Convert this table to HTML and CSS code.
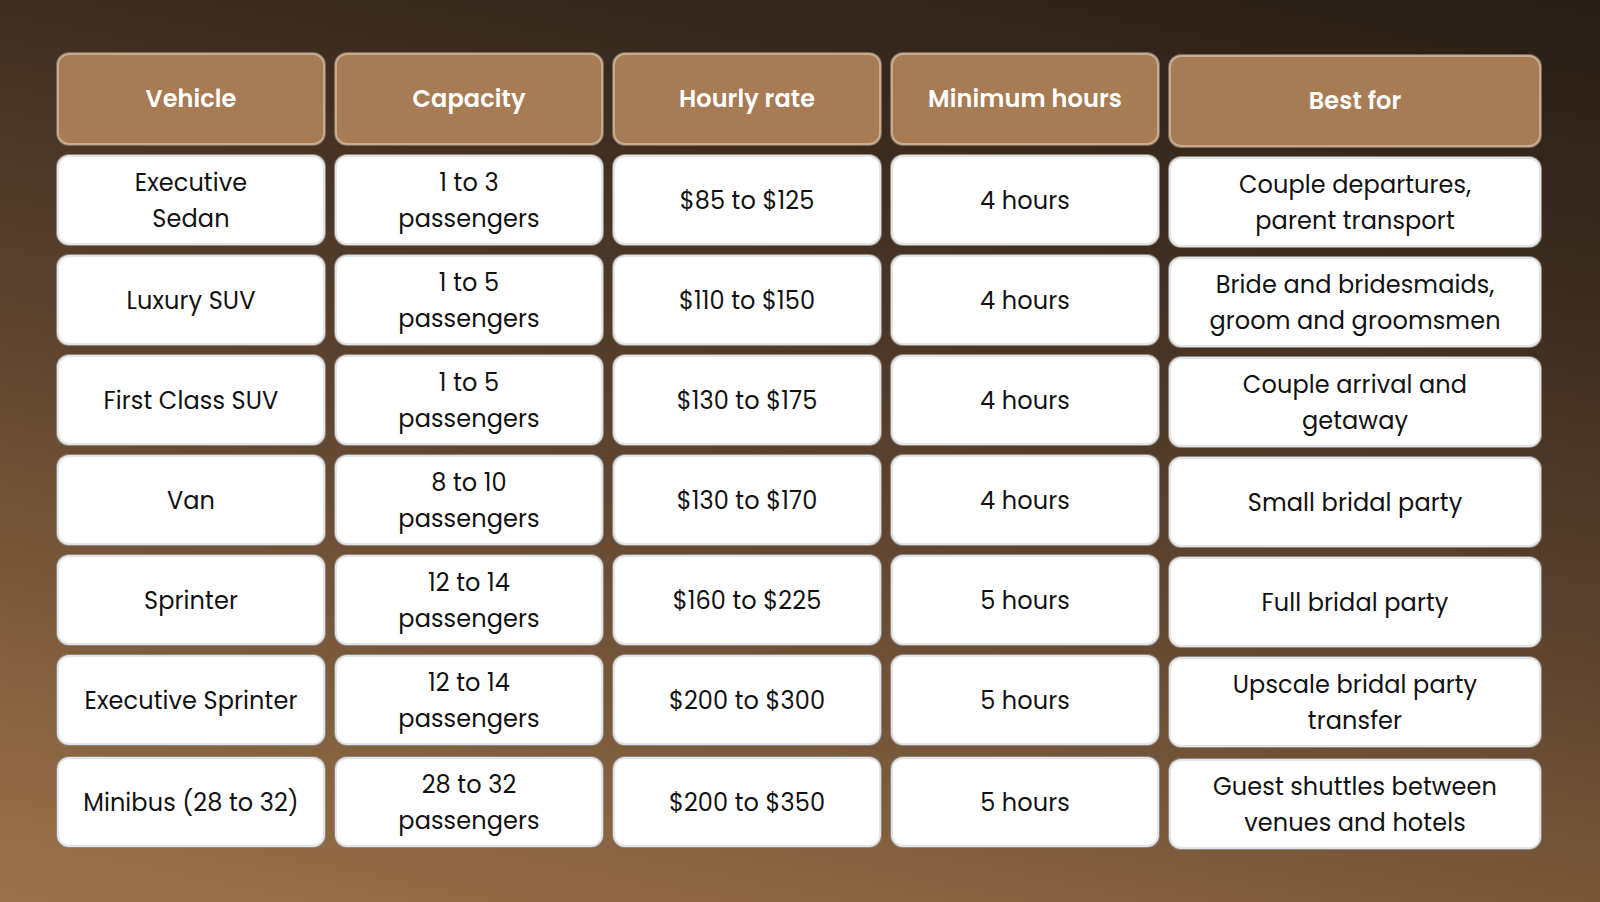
FILE: index.html
```html
<!DOCTYPE html>
<html lang="en">
<head>
<meta charset="utf-8">
<title>Wedding transportation rates</title>
<link rel="stylesheet" href="styles.css">
</head>
<body>
<main class="board">
  <div class="col">
    <div class="cell head">Vehicle</div>
    <div class="cell">Executive<br>Sedan</div>
    <div class="cell">Luxury SUV</div>
    <div class="cell">First Class SUV</div>
    <div class="cell">Van</div>
    <div class="cell">Sprinter</div>
    <div class="cell">Executive Sprinter</div>
    <div class="cell last">Minibus (28 to 32)</div>
  </div>
  <div class="col">
    <div class="cell head">Capacity</div>
    <div class="cell">1 to 3<br>passengers</div>
    <div class="cell">1 to 5<br>passengers</div>
    <div class="cell">1 to 5<br>passengers</div>
    <div class="cell">8 to 10<br>passengers</div>
    <div class="cell">12 to 14<br>passengers</div>
    <div class="cell">12 to 14<br>passengers</div>
    <div class="cell last">28 to 32<br>passengers</div>
  </div>
  <div class="col">
    <div class="cell head">Hourly rate</div>
    <div class="cell">$85 to $125</div>
    <div class="cell">$110 to $150</div>
    <div class="cell">$130 to $175</div>
    <div class="cell">$130 to $170</div>
    <div class="cell">$160 to $225</div>
    <div class="cell">$200 to $300</div>
    <div class="cell last">$200 to $350</div>
  </div>
  <div class="col">
    <div class="cell head">Minimum hours</div>
    <div class="cell">4 hours</div>
    <div class="cell">4 hours</div>
    <div class="cell">4 hours</div>
    <div class="cell">4 hours</div>
    <div class="cell">5 hours</div>
    <div class="cell">5 hours</div>
    <div class="cell last">5 hours</div>
  </div>
  <div class="col wide">
    <div class="cell head">Best for</div>
    <div class="cell">Couple departures,<br>parent transport</div>
    <div class="cell">Bride and bridesmaids,<br>groom and groomsmen</div>
    <div class="cell">Couple arrival and<br>getaway</div>
    <div class="cell">Small bridal party</div>
    <div class="cell">Full bridal party</div>
    <div class="cell">Upscale bridal party<br>transfer</div>
    <div class="cell last">Guest shuttles between<br>venues and hotels</div>
  </div>
</main>
</body>
</html>
```

FILE: styles.css
```css
* { box-sizing: border-box; }
html, body {
  margin: 0;
  width: 1600px;
  height: 902px;
  overflow: hidden;
}
body {
  background: linear-gradient(192deg, #281e16 0%, #3f2e21 28%, #634832 58%, #85623f 82%, #9c7149 100%);
  font-family: Poppins, Inter, "Noto Sans", sans-serif;
  color: #111;
}
.board {
  display: flex;
  gap: 10px;
  padding: 53px 0 0 57px;
}
.col {
  display: flex;
  flex-direction: column;
  gap: 10px;
  width: 268px;
}
.col.wide {
  width: 372px;
  padding-top: 2px;
}
.cell {
  height: 90px;
  display: flex;
  align-items: center;
  justify-content: center;
  text-align: center;
  background: #fff;
  border: 2px solid #e4e4e4;
  border-radius: 12px;
  box-shadow: 0 0 0 1px #8f8780;
  padding-top: 2px;
  font-size: 24px;
  line-height: 36px;
  letter-spacing: 0.1px;
}
.cell.head {
  height: 92px;
  padding-top: 0;
  background: #a77b53;
  border-color: #c4ab91;
  box-shadow: 0 0 0 1px #7d6a58;
  color: #fff;
  font-weight: 600;
  font-size: 24px;
}
.cell.last {
  margin-top: 2px;
}
```
